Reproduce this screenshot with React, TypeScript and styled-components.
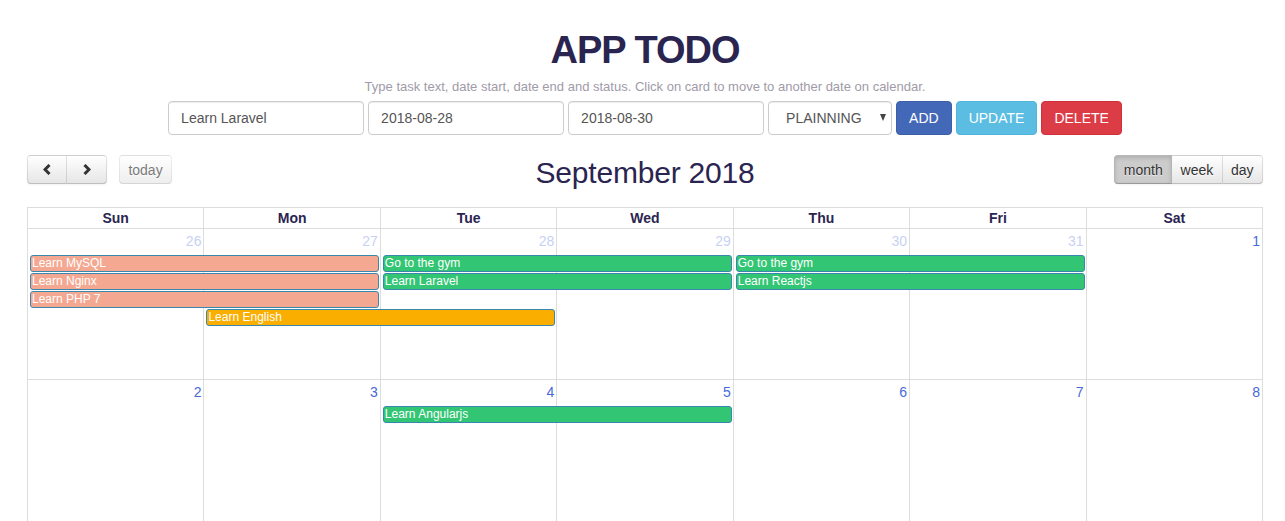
import React from 'react';
import styled, { createGlobalStyle } from 'styled-components';

const NAVY = '#2a2550';
const LINE = '#ddd';

const GlobalStyle = createGlobalStyle`
  * { box-sizing: border-box; }
  html, body { overflow: hidden; }
  body {
    margin: 0;
    background: #fff;
    font-family: "Liberation Sans", Arial, Helvetica, sans-serif;
    font-size: 14px;
    color: #333;
  }
`;

const Page = styled.div`
  padding: 29px 22px 0 27px;
`;

const Title = styled.h1`
  margin: 0;
  text-align: center;
  font-size: 38px;
  line-height: 42px;
  font-weight: 700;
  letter-spacing: -1px;
  color: ${NAVY};
`;

const Hint = styled.p`
  margin: 7px 0 0;
  text-align: center;
  font-size: 13px;
  line-height: 18px;
  color: #a09ba8;
`;

const Form = styled.div`
  display: flex;
  justify-content: center;
  gap: 4px;
  margin-top: 5px;
`;

const Field = styled.input`
  width: 196px;
  height: 34px;
  padding: 6px 12px;
  font: 14px "Liberation Sans", Arial, sans-serif;
  color: #555;
  background: #fff;
  border: 1px solid #ccc;
  border-radius: 4px;
  box-shadow: inset 0 1px 1px rgba(0, 0, 0, 0.075);
  outline: none;
`;

const SelectWrap = styled.div`
  position: relative;
  width: 124px;
  height: 34px;
`;

const Select = styled.select`
  appearance: none;
  width: 100%;
  height: 100%;
  padding: 0 0 0 17px;
  font: 14px "Liberation Sans", Arial, sans-serif;
  color: #555;
  background: #fff;
  border: 1px solid #ccc;
  border-radius: 4px;
  box-shadow: inset 0 1px 1px rgba(0, 0, 0, 0.075);
  outline: none;
`;

// little down triangle drawn over the native select
const Caret = styled.span`
  position: absolute;
  right: 6px;
  top: 13px;
  width: 0;
  height: 0;
  border-left: 3.5px solid transparent;
  border-right: 3.5px solid transparent;
  border-top: 7px solid #444;
  pointer-events: none;
`;

const ActionButton = styled.button<{ $bg: string; $border: string }>`
  height: 34px;
  padding: 6px 12px;
  font: 14px "Liberation Sans", Arial, sans-serif;
  color: #fff;
  background: ${(p) => p.$bg};
  border: 1px solid ${(p) => p.$border};
  border-radius: 4px;
  cursor: pointer;
`;

const Toolbar = styled.div`
  display: grid;
  grid-template-columns: 1fr auto 1fr;
  grid-template-rows: 29px;
  align-items: center;
  margin: 20px 0 23px;
`;

const ToolLeft = styled.div`
  display: flex;
  align-items: center;
  gap: 12px;
`;

const ToolRight = styled.div`
  display: flex;
  justify-content: flex-end;
`;

const MonthTitle = styled.h2`
  margin: 0;
  padding-top: 6px;
  font-size: 30px;
  line-height: 30px;
  font-weight: 400;
  letter-spacing: -0.2px;
  color: ${NAVY};
`;

const Group = styled.div`
  display: flex;
`;

const FcButton = styled.button<{ $active?: boolean; $w?: number }>`
  display: inline-flex;
  align-items: center;
  justify-content: center;
  height: 29px;
  width: ${(p) => (p.$w ? `${p.$w}px` : 'auto')};
  padding: 0 0.6em;
  font: 14px "Liberation Sans", Arial, sans-serif;
  color: #333;
  background-color: ${(p) => (p.$active ? '#ccc' : '#f5f5f5')};
  background-image: ${(p) => (p.$active ? 'none' : 'linear-gradient(to bottom, #fff, #e6e6e6)')};
  border: 1px solid rgba(0, 0, 0, 0.1);
  border-bottom-color: rgba(0, 0, 0, 0.25);
  border-radius: 0;
  text-shadow: 0 1px 1px rgba(255, 255, 255, 0.75);
  box-shadow: ${(p) =>
    p.$active
      ? 'inset 0 2px 4px rgba(0,0,0,.15), 0 1px 2px rgba(0,0,0,.05)'
      : 'inset 0 1px 0 rgba(255,255,255,.2), 0 1px 2px rgba(0,0,0,.05)'};
  cursor: pointer;

  & + & {
    border-left: none;
  }
  &:first-child {
    border-top-left-radius: 4px;
    border-bottom-left-radius: 4px;
  }
  &:last-child {
    border-top-right-radius: 4px;
    border-bottom-right-radius: 4px;
  }
  &:disabled {
    opacity: 0.65;
    box-shadow: none;
    cursor: default;
  }
`;

const Calendar = styled.div`
  border-top: 1px solid ${LINE};
  border-left: 1px solid ${LINE};
`;

const HeadRow = styled.div`
  display: grid;
  grid-template-columns: repeat(7, 1fr);
`;

const HeadCell = styled.div`
  height: 21px;
  line-height: 20px;
  text-align: center;
  font-weight: 700;
  color: ${NAVY};
  border-right: 1px solid ${LINE};
  border-bottom: 1px solid ${LINE};
`;

const Week = styled.div`
  display: grid;
  grid-template-columns: repeat(7, 1fr);
  grid-template-rows: 25px repeat(4, 18px) 1fr;
  height: 151px;
`;

const DayBg = styled.div<{ $col: number }>`
  grid-row: 1 / -1;
  grid-column: ${(p) => p.$col};
  border-right: 1px solid ${LINE};
  border-bottom: 1px solid ${LINE};
`;

const DayNum = styled.div<{ $col: number; $muted?: boolean }>`
  grid-row: 1;
  grid-column: ${(p) => p.$col};
  padding: 2px 3px 0 2px;
  line-height: 20px;
  text-align: right;
  color: #4669d8;
  opacity: ${(p) => (p.$muted ? 0.3 : 1)};
`;

const EventBar = styled.div<{ $bg: string; $start: number; $span: number; $row: number }>`
  grid-column: ${(p) => p.$start} / span ${(p) => p.$span};
  grid-row: ${(p) => p.$row + 2};
  margin: 1px 2px 0;
  height: 17px;
  padding: 0 1px;
  font-size: 12px;
  line-height: 15px;
  color: #fff;
  background: ${(p) => p.$bg};
  border: 1px solid #3a87ad;
  border-radius: 3px;
  white-space: nowrap;
  overflow: hidden;
`;

const COLORS = {
  planning: '#f5a891',
  done: '#32c574',
  doing: '#f9ae00',
};

type CalEvent = { title: string; start: number; span: number; row: number; color: string };

const weeks: { days: { n: number; muted?: boolean }[]; events: CalEvent[] }[] = [
  {
    days: [
      { n: 26, muted: true },
      { n: 27, muted: true },
      { n: 28, muted: true },
      { n: 29, muted: true },
      { n: 30, muted: true },
      { n: 31, muted: true },
      { n: 1 },
    ],
    events: [
      { title: 'Learn MySQL', start: 1, span: 2, row: 0, color: COLORS.planning },
      { title: 'Learn Nginx', start: 1, span: 2, row: 1, color: COLORS.planning },
      { title: 'Learn PHP 7', start: 1, span: 2, row: 2, color: COLORS.planning },
      { title: 'Learn English', start: 2, span: 2, row: 3, color: COLORS.doing },
      { title: 'Go to the gym', start: 3, span: 2, row: 0, color: COLORS.done },
      { title: 'Learn Laravel', start: 3, span: 2, row: 1, color: COLORS.done },
      { title: 'Go to the gym', start: 5, span: 2, row: 0, color: COLORS.done },
      { title: 'Learn Reactjs', start: 5, span: 2, row: 1, color: COLORS.done },
    ],
  },
  {
    days: [2, 3, 4, 5, 6, 7, 8].map((n) => ({ n })),
    events: [{ title: 'Learn Angularjs', start: 3, span: 2, row: 0, color: COLORS.done }],
  },
];

const Chevron = ({ dir }: { dir: 'left' | 'right' }) => (
  <svg width="8" height="11" viewBox="0 0 8 11">
    <polyline
      points={dir === 'left' ? '6.5,1 2,5.5 6.5,10' : '1.5,1 6,5.5 1.5,10'}
      fill="none"
      stroke="#333"
      strokeWidth="3"
    />
  </svg>
);

export default function App() {
  return (
    <Page>
      <GlobalStyle />
      <Title>APP TODO</Title>
      <Hint>Type task text, date start, date end and status. Click on card to move to another date on calendar.</Hint>
      <Form>
        <Field defaultValue="Learn Laravel" />
        <Field defaultValue="2018-08-28" />
        <Field defaultValue="2018-08-30" />
        <SelectWrap>
          <Select defaultValue="PLAINNING">
            <option>PLAINNING</option>
            <option>DOING</option>
            <option>DONE</option>
          </Select>
          <Caret />
        </SelectWrap>
        <ActionButton $bg="#4468b8" $border="#3d5ea8">ADD</ActionButton>
        <ActionButton $bg="#5bbde2" $border="#52b4d8">UPDATE</ActionButton>
        <ActionButton $bg="#dc3c45" $border="#cf3039">DELETE</ActionButton>
      </Form>

      <Toolbar>
        <ToolLeft>
          <Group>
            <FcButton $w={40}>
              <Chevron dir="left" />
            </FcButton>
            <FcButton $w={40}>
              <Chevron dir="right" />
            </FcButton>
          </Group>
          <Group>
            <FcButton disabled>today</FcButton>
          </Group>
        </ToolLeft>
        <MonthTitle>September 2018</MonthTitle>
        <ToolRight>
          <Group>
            <FcButton $active>month</FcButton>
            <FcButton>week</FcButton>
            <FcButton>day</FcButton>
          </Group>
        </ToolRight>
      </Toolbar>

      <Calendar>
        <HeadRow>
          {['Sun', 'Mon', 'Tue', 'Wed', 'Thu', 'Fri', 'Sat'].map((d) => (
            <HeadCell key={d}>{d}</HeadCell>
          ))}
        </HeadRow>
        {weeks.map((w, wi) => (
          <Week key={wi}>
            {w.days.map((d, i) => (
              <DayBg key={`bg${i}`} $col={i + 1} />
            ))}
            {w.days.map((d, i) => (
              <DayNum key={`n${i}`} $col={i + 1} $muted={d.muted}>
                {d.n}
              </DayNum>
            ))}
            {w.events.map((e, i) => (
              <EventBar key={`e${i}`} $bg={e.color} $start={e.start} $span={e.span} $row={e.row}>
                {e.title}
              </EventBar>
            ))}
          </Week>
        ))}
      </Calendar>
    </Page>
  );
}
